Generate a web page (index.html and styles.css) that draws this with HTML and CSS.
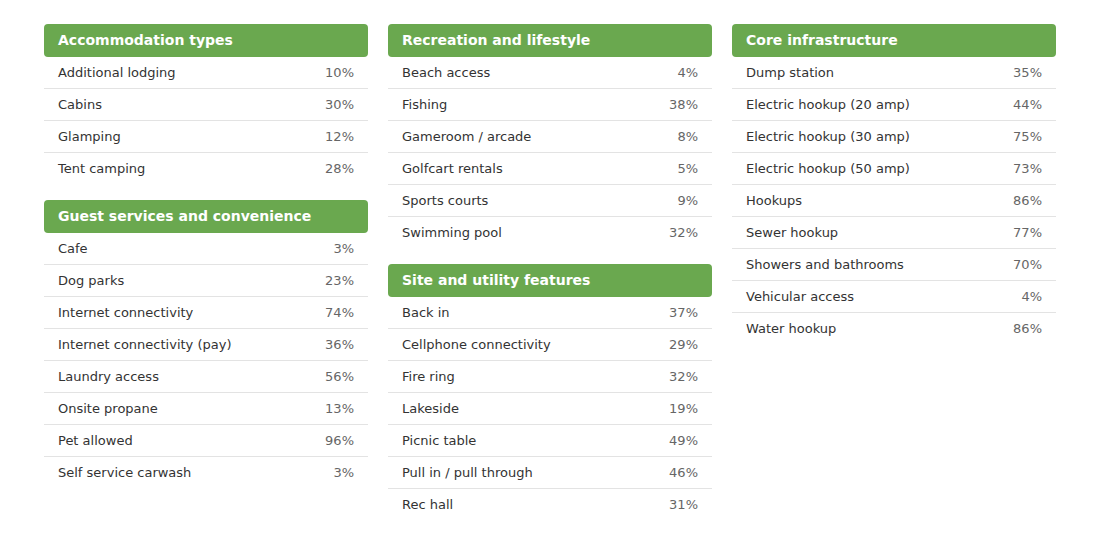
FILE: index.html
```html
<!DOCTYPE html>
<html>
<head>
<meta charset="utf-8">
<link rel="stylesheet" href="styles.css">
</head>
<body>
<div class="grid">
  <div class="col">
    <section class="group">
      <h2 class="head">Accommodation types</h2>
      <div class="row"><span>Additional lodging</span><span class="pct">10%</span></div>
      <div class="row"><span>Cabins</span><span class="pct">30%</span></div>
      <div class="row"><span>Glamping</span><span class="pct">12%</span></div>
      <div class="row"><span>Tent camping</span><span class="pct">28%</span></div>
    </section>
    <section class="group">
      <h2 class="head">Guest services and convenience</h2>
      <div class="row"><span>Cafe</span><span class="pct">3%</span></div>
      <div class="row"><span>Dog parks</span><span class="pct">23%</span></div>
      <div class="row"><span>Internet connectivity</span><span class="pct">74%</span></div>
      <div class="row"><span>Internet connectivity (pay)</span><span class="pct">36%</span></div>
      <div class="row"><span>Laundry access</span><span class="pct">56%</span></div>
      <div class="row"><span>Onsite propane</span><span class="pct">13%</span></div>
      <div class="row"><span>Pet allowed</span><span class="pct">96%</span></div>
      <div class="row"><span>Self service carwash</span><span class="pct">3%</span></div>
    </section>
  </div>
  <div class="col">
    <section class="group">
      <h2 class="head">Recreation and lifestyle</h2>
      <div class="row"><span>Beach access</span><span class="pct">4%</span></div>
      <div class="row"><span>Fishing</span><span class="pct">38%</span></div>
      <div class="row"><span>Gameroom / arcade</span><span class="pct">8%</span></div>
      <div class="row"><span>Golfcart rentals</span><span class="pct">5%</span></div>
      <div class="row"><span>Sports courts</span><span class="pct">9%</span></div>
      <div class="row"><span>Swimming pool</span><span class="pct">32%</span></div>
    </section>
    <section class="group">
      <h2 class="head">Site and utility features</h2>
      <div class="row"><span>Back in</span><span class="pct">37%</span></div>
      <div class="row"><span>Cellphone connectivity</span><span class="pct">29%</span></div>
      <div class="row"><span>Fire ring</span><span class="pct">32%</span></div>
      <div class="row"><span>Lakeside</span><span class="pct">19%</span></div>
      <div class="row"><span>Picnic table</span><span class="pct">49%</span></div>
      <div class="row"><span>Pull in / pull through</span><span class="pct">46%</span></div>
      <div class="row"><span>Rec hall</span><span class="pct">31%</span></div>
    </section>
  </div>
  <div class="col">
    <section class="group">
      <h2 class="head">Core infrastructure</h2>
      <div class="row"><span>Dump station</span><span class="pct">35%</span></div>
      <div class="row"><span>Electric hookup (20 amp)</span><span class="pct">44%</span></div>
      <div class="row"><span>Electric hookup (30 amp)</span><span class="pct">75%</span></div>
      <div class="row"><span>Electric hookup (50 amp)</span><span class="pct">73%</span></div>
      <div class="row"><span>Hookups</span><span class="pct">86%</span></div>
      <div class="row"><span>Sewer hookup</span><span class="pct">77%</span></div>
      <div class="row"><span>Showers and bathrooms</span><span class="pct">70%</span></div>
      <div class="row"><span>Vehicular access</span><span class="pct">4%</span></div>
      <div class="row"><span>Water hookup</span><span class="pct">86%</span></div>
    </section>
  </div>
</div>
</body>
</html>
```
FILE: styles.css
```css
html, body {
  margin: 0;
  padding: 0;
  background: #ffffff;
}
body {
  font-family: "DejaVu Sans", sans-serif;
  color: #333333;
}
.grid {
  display: grid;
  grid-template-columns: repeat(3, 324px);
  column-gap: 20px;
  padding: 24px 44px;
  align-items: start;
}
.col {
  display: flex;
  flex-direction: column;
  gap: 15px;
}
.group {
  display: flex;
  flex-direction: column;
}
.head {
  margin: 0;
  background: #6aa84f;
  color: #ffffff;
  font-size: 14px;
  font-weight: bold;
  line-height: 17px;
  padding: 8px 14px;
  border-radius: 4px;
}
.row {
  display: flex;
  justify-content: space-between;
  align-items: center;
  height: 31px;
  padding: 0 14px;
  font-size: 13px;
  border-bottom: 1px solid #e3e3e3;
}
.row:last-child {
  border-bottom-color: transparent;
}
.pct {
  color: #666666;
}
```
